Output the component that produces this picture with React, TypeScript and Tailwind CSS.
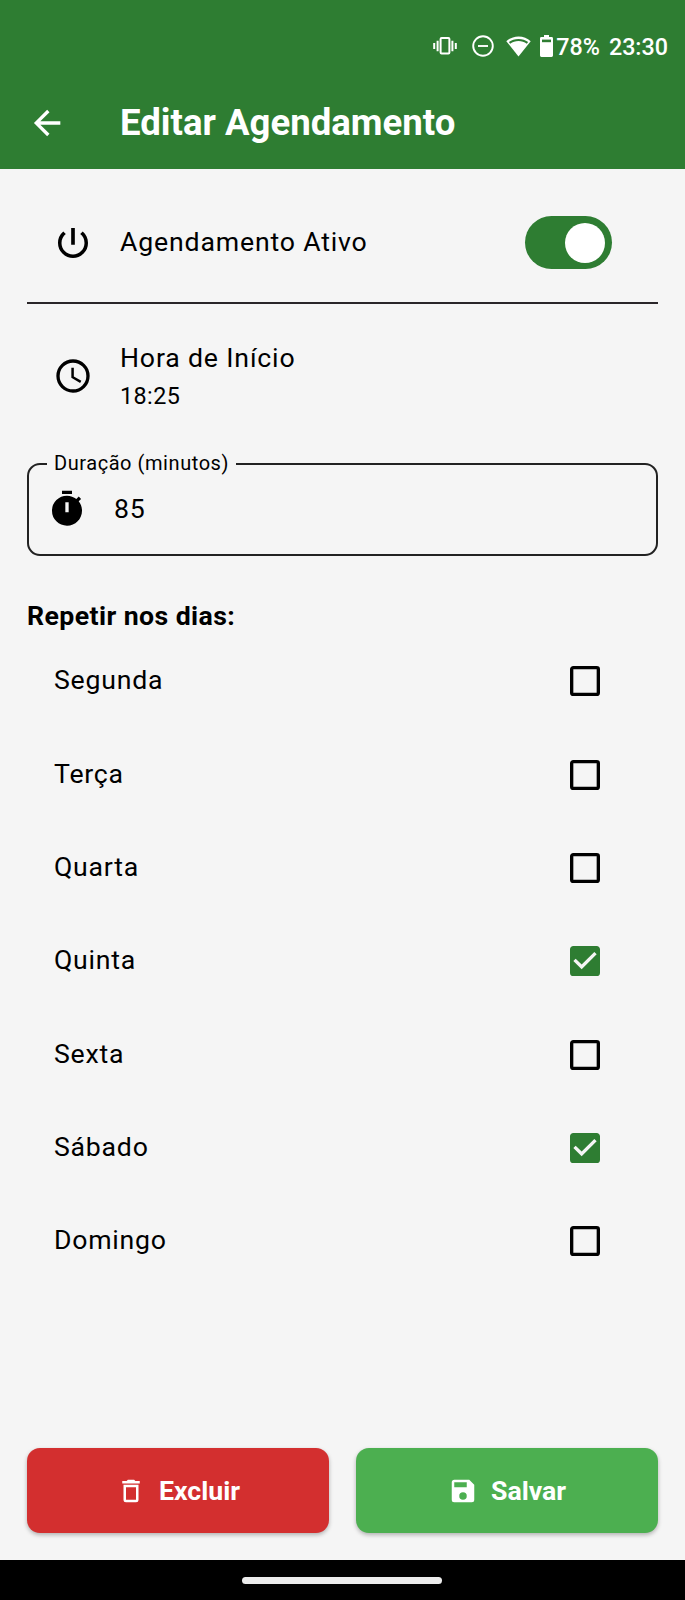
import type { ReactNode } from 'react';

const days = [
  { name: 'Segunda', checked: false },
  { name: 'Terça', checked: false },
  { name: 'Quarta', checked: false },
  { name: 'Quinta', checked: true },
  { name: 'Sexta', checked: false },
  { name: 'Sábado', checked: true },
  { name: 'Domingo', checked: false },
];

function Icon({ d, className }: { d: string; className: string }) {
  return (
    <svg viewBox="0 0 24 24" fill="currentColor" className={`shrink-0 ${className}`} aria-hidden="true">
      <path d={d} />
    </svg>
  );
}

const icons = {
  back: 'M20 11v2H8l5.5 5.5-1.42 1.42L4.16 12l7.92-7.92L13.5 5.5 8 11h12Z',
  power:
    'M13.1 3h-2.2v10h2.2V3zm4.73 2.17-1.5 1.5A6.8 6.8 0 0 1 18.9 12c0 3.8-3.1 6.9-6.9 6.9s-6.9-3.1-6.9-6.9c0-2.1 1-4.05 2.57-5.33L6.17 5.17A8.93 8.93 0 0 0 3 12a9 9 0 0 0 18 0c0-2.74-1.23-5.18-3.17-6.83z',
  clock:
    'M12 20a8 8 0 0 0 8-8 8 8 0 0 0-8-8 8 8 0 0 0-8 8 8 8 0 0 0 8 8m0-18a10 10 0 0 1 10 10 10 10 0 0 1-10 10C6.47 22 2 17.5 2 12A10 10 0 0 1 12 2m.5 5v5.25l4.5 2.67-.75 1.23L11 13V7h1.5Z',
  timer:
    'M19.03 7.39l1.42-1.42c-.45-.51-.9-.97-1.41-1.41L17.62 6c-1.55-1.26-3.5-2-5.62-2a9 9 0 0 0-9 9 9 9 0 0 0 9 9c5 0 9-4.03 9-9 0-2.12-.74-4.07-1.97-5.61M13 14h-2V8h2m2-7H9v2h6V1Z',
  box: 'M19 3H5c-1.11 0-2 .89-2 2v14a2 2 0 0 0 2 2h14a2 2 0 0 0 2-2V5a2 2 0 0 0-2-2m0 2v14H5V5h14Z',
  boxChecked:
    'M10 17l-5-5 1.41-1.42L10 14.17l7.59-7.59L19 8m0-5H5c-1.11 0-2 .89-2 2v14a2 2 0 0 0 2 2h14a2 2 0 0 0 2-2V5c0-1.11-.9-2-2-2Z',
  trash:
    'M6 19a2 2 0 0 0 2 2h8a2 2 0 0 0 2-2V7H6v12M8 9h8v10H8V9m7.5-5l-1-1h-5l-1 1H5v2h14V4h-3.5Z',
  save: 'M15 9H5V5h10m-3 14a3 3 0 0 1-3-3 3 3 0 0 1 3-3 3 3 0 0 1 3 3 3 3 0 0 1-3 3m5-16H5c-1.11 0-2 .9-2 2v14a2 2 0 0 0 2 2h14a2 2 0 0 0 2-2V7l-4-4Z',
};

function StatusBar() {
  return (
    <div className="flex h-[92px] items-center justify-end pr-[17px] text-[23.3px] font-medium">
      <svg viewBox="0 0 24 20" className="mr-[15px] h-[20px] w-[24px]" fill="none" stroke="currentColor" strokeWidth="2" aria-hidden="true">
        <rect x="7.6" y="2" width="8.8" height="15.6" rx="1" />
        <path d="M1.2 7v6M4.6 4.8v10.4M22.8 7v6M19.4 4.8v10.4" />
      </svg>
      <svg viewBox="0 0 22 22" className="mr-[12px] h-[22px] w-[22px]" fill="none" stroke="currentColor" strokeWidth="1.9" aria-hidden="true">
        <circle cx="11" cy="11" r="9.8" />
        <path d="M6 11h10" />
      </svg>
      <svg viewBox="0 0 25 21" className="mr-[9px] h-[21px] w-[25px]" aria-hidden="true">
        <path d="M12.5 0.4C7.8 .4 3.5 2.2.3 5.2L12.5 20.6 24.7 5.2C21.5 2.2 17.2.4 12.5.4Z" fill="currentColor" />
        <path d="M2.9 6C5.6 3.9 8.8 2.9 12.5 2.9s6.9 1 9.6 3.1l-1.3 1.7C18.4 5.9 15.7 5.1 12.5 5.1S6.6 5.9 4.2 7.7Z" fill="#2e7d32" />
      </svg>
      <svg viewBox="0 0 13 22" className="mr-[3px] h-[22px] w-[13px]" aria-hidden="true">
        <path d="M4 0h5v2h2.6q1.4 0 1.4 1.4v17.2q0 1.4-1.4 1.4H1.4Q0 22 0 20.6V3.4Q0 2 1.4 2H4Z" fill="currentColor" />
        <path d="M2 4.6h9v2.6H2Z" fill="#2e7d32" />
      </svg>
      <span className="relative top-px mr-[9px]">78%</span>
      <span className="relative top-px">23:30</span>
    </div>
  );
}

function ActionButton({ color, icon, children }: { color: string; icon: string; children: ReactNode }) {
  return (
    <button
      className={`flex h-[85px] flex-1 items-center justify-center gap-[13px] rounded-[13px] text-[26.67px] font-bold text-white shadow-[0_2px_4px_rgba(0,0,0,0.28)] ${color}`}
    >
      <Icon d={icon} className="size-[30px]" />
      <span>{children}</span>
    </button>
  );
}

export default function App() {
  return (
    <div className="flex h-[1600px] w-[685px] flex-col bg-[#f5f5f5] font-['Roboto',sans-serif] text-black">
      <header className="h-[169px] shrink-0 bg-[#2e7d32] text-white">
        <StatusBar />
        <div className="flex h-[62px] items-center pl-[26.5px]">
          <Icon d={icons.back} className="size-[40px]" />
          <h1 className="ml-[53.5px] text-[36.6px] leading-none font-bold">Editar Agendamento</h1>
        </div>
      </header>

      <main className="flex flex-1 flex-col px-[27px]">
        <div className="flex h-[133px] items-center pt-[14px] pr-[46px] pl-[26px]">
          <Icon d={icons.power} className="size-[40px]" />
          <span className="ml-[27px] flex-1 pb-[2px] text-[26.67px] leading-[32px] tracking-[0.83px]">
            Agendamento Ativo
          </span>
          <div className="flex h-[53px] w-[87px] items-center justify-end rounded-full bg-[#2e7d32] pr-[7px]">
            <div className="size-[40px] rounded-full bg-white" />
          </div>
        </div>
        <div className="h-[1.67px] bg-[#2a2629]" />

        <div className="mt-[35px] flex h-[74px] items-center pl-[26px]">
          <Icon d={icons.clock} className="size-[40px]" />
          <div className="ml-[27px] pt-[2px]">
            <div className="text-[26.67px] leading-[38px] tracking-[0.83px]">Hora de Início</div>
            <div className="pt-px text-[23.33px] leading-[36px] tracking-[0.42px]">18:25</div>
          </div>
        </div>

        <fieldset className="mt-[39px] h-[104px] rounded-[13px] border-2 border-[#222] pl-[18px]">
          <legend className="px-[7px] pb-[2px] text-[20px] leading-[22px] tracking-[0.56px]">Duração (minutos)</legend>
          <div className="flex h-[66px] items-center">
            <Icon d={icons.timer} className="size-[40px]" />
            <span className="ml-[27px] text-[26.67px] tracking-[0.83px]">85</span>
          </div>
        </fieldset>

        <h2 className="mt-[41px] text-[26.67px] leading-[38px] font-bold tracking-[0.42px]">Repetir nos dias:</h2>
        <ul>
          {days.map((day) => (
            <li key={day.name} className="flex h-[93.33px] items-center justify-between pr-[53px] pl-[27px]">
              <span className="pb-[2px] text-[26.67px] leading-[38px] tracking-[0.76px]">{day.name}</span>
              <Icon
                d={day.checked ? icons.boxChecked : icons.box}
                className={day.checked ? 'size-[40px] text-[#2e7d32]' : 'size-[40px]'}
              />
            </li>
          ))}
        </ul>

        <div className="mt-auto mb-[27px] flex gap-[27px]">
          <ActionButton color="bg-[#d32f2f]" icon={icons.trash}>
            Excluir
          </ActionButton>
          <ActionButton color="bg-[#4caf50]" icon={icons.save}>
            Salvar
          </ActionButton>
        </div>
      </main>

      <footer className="flex h-[40px] shrink-0 items-center justify-center bg-black">
        <div className="mr-px h-[7px] w-[200px] rounded-full bg-[#ececec]" />
      </footer>
    </div>
  );
}
